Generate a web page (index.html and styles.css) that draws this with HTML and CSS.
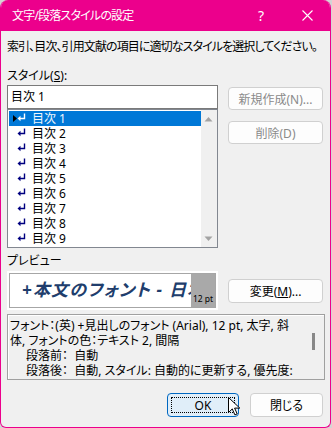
FILE: index.html
```html
<!DOCTYPE html>
<html lang="ja">

<head>
    <meta charset="UTF-8">
    <meta name="viewport" content="width=device-width, initial-scale=1.0">
    <title>文字/段落スタイルの設定</title>
    <link rel="stylesheet" href="styles.css">
</head>

<body>
    <div class="window">
        <div class="titlebar">
            <span class="title">文字/段落スタイルの設定</span>
            <span class="caption-btn">?</span>
            <span class="caption-btn">
                <svg width="11" height="11" viewBox="0 0 11 11"><path d="M0.5 0.5l10 10M10.5 0.5l-10 10" stroke="#fff" stroke-width="1.1" fill="none"/></svg>
            </span>
        </div>

        <div class="content">
            <p class="intro">索引、目次、引用文献の項目に適切なスタイルを選択してください。</p>

            <div class="style-section">
                <div class="style-left">
                    <div class="label">スタイル(<u>S</u>):</div>
                    <div class="style-input">目次 1</div>
                    <div class="style-list">
                        <ul class="rows">
                            <li class="row selected">
                                <svg class="row-icon" width="23" height="15" viewBox="0 0 23 15">
                                    <path d="M4 4l4 3.5-4 3.5z" fill="#000"/>
                                    <path d="M15.5 2.5v5H11" stroke="#fff" stroke-width="1.4" fill="none"/>
                                    <path d="M8.5 7.5l3-2.8v5.6z" fill="#fff"/>
                                </svg>
                                <span>目次 1</span>
                            </li>
                            <li class="row"><svg class="row-icon" width="23" height="15" viewBox="0 0 23 15"><path d="M15.5 2.5v5H11" stroke="#000080" stroke-width="1.4" fill="none"/><path d="M8.5 7.5l3-2.8v5.6z" fill="#000080"/></svg><span>目次 2</span></li>
                            <li class="row"><svg class="row-icon" width="23" height="15" viewBox="0 0 23 15"><path d="M15.5 2.5v5H11" stroke="#000080" stroke-width="1.4" fill="none"/><path d="M8.5 7.5l3-2.8v5.6z" fill="#000080"/></svg><span>目次 3</span></li>
                            <li class="row"><svg class="row-icon" width="23" height="15" viewBox="0 0 23 15"><path d="M15.5 2.5v5H11" stroke="#000080" stroke-width="1.4" fill="none"/><path d="M8.5 7.5l3-2.8v5.6z" fill="#000080"/></svg><span>目次 4</span></li>
                            <li class="row"><svg class="row-icon" width="23" height="15" viewBox="0 0 23 15"><path d="M15.5 2.5v5H11" stroke="#000080" stroke-width="1.4" fill="none"/><path d="M8.5 7.5l3-2.8v5.6z" fill="#000080"/></svg><span>目次 5</span></li>
                            <li class="row"><svg class="row-icon" width="23" height="15" viewBox="0 0 23 15"><path d="M15.5 2.5v5H11" stroke="#000080" stroke-width="1.4" fill="none"/><path d="M8.5 7.5l3-2.8v5.6z" fill="#000080"/></svg><span>目次 6</span></li>
                            <li class="row"><svg class="row-icon" width="23" height="15" viewBox="0 0 23 15"><path d="M15.5 2.5v5H11" stroke="#000080" stroke-width="1.4" fill="none"/><path d="M8.5 7.5l3-2.8v5.6z" fill="#000080"/></svg><span>目次 7</span></li>
                            <li class="row"><svg class="row-icon" width="23" height="15" viewBox="0 0 23 15"><path d="M15.5 2.5v5H11" stroke="#000080" stroke-width="1.4" fill="none"/><path d="M8.5 7.5l3-2.8v5.6z" fill="#000080"/></svg><span>目次 8</span></li>
                            <li class="row"><svg class="row-icon" width="23" height="15" viewBox="0 0 23 15"><path d="M15.5 2.5v5H11" stroke="#000080" stroke-width="1.4" fill="none"/><path d="M8.5 7.5l3-2.8v5.6z" fill="#000080"/></svg><span>目次 9</span></li>
                        </ul>
                        <div class="vscroll">
                            <svg width="15" height="15" viewBox="0 0 15 15"><path d="M3.5 9.5l4-4.5 4 4.5z" fill="#a3a3a3"/></svg>
                            <svg width="15" height="15" viewBox="0 0 15 15"><path d="M3.5 5.5l4 4.5 4-4.5z" fill="#a3a3a3"/></svg>
                        </div>
                    </div>
                </div>
                <div class="style-buttons">
                    <button class="btn" disabled>新規作成(N)...</button>
                    <button class="btn" disabled>削除(D)</button>
                </div>
            </div>

            <div class="label preview-label">プレビュー</div>
            <div class="preview-row">
                <div class="preview">
                    <div class="preview-inner">
                        <div class="preview-text">+本文のフォント - 日本語</div>
                        <div class="preview-size">12 pt</div>
                    </div>
                </div>
                <button class="btn">変更(<u>M</u>)...</button>
            </div>

            <div class="desc">
                <div class="desc-text">
                    <div>フォント：(英) +見出しのフォント (Arial), 12 pt, 太字, 斜</div>
                    <div>体, フォントの色：テキスト 2, 間隔</div>
                    <div class="indent">段落前：&nbsp; 自動</div>
                    <div class="indent">段落後：&nbsp; 自動, スタイル: 自動的に更新する, 優先度:</div>
                </div>
                <div class="desc-scroll"><span class="thumb"></span></div>
            </div>

            <div class="footer">
                <button class="btn btn-default"><span class="focus">OK</span></button>
                <button class="btn btn-close">閉じる</button>
            </div>
        </div>

        <!-- mouse pointer over the OK button -->
        <svg class="cursor" width="13" height="19" viewBox="0 0 13 19">
            <path d="M0.5 0.5v15l3.8-3.6 2.6 6 2.3-1-2.6-5.8h5.2z" fill="#fff" stroke="#000" stroke-width="1"/>
        </svg>
    </div>
</body>

</html>
```

FILE: styles.css
```css
* {
    margin: 0;
    padding: 0;
    box-sizing: border-box;
}

body {
    background: #d4d4d4;
    font-family: "Noto Sans", "Noto Sans CJK JP", sans-serif;
    font-size: 12px;
    font-feature-settings: "palt";
    color: #000;
}

/* Dialog frame */
.window {
    position: relative;
    width: 331px;
    height: 428px;
    background: #f0f0f0;
    border: 1px solid #ec008c;
    border-top: none;
    border-radius: 8px 8px 6px 6px;
    overflow: hidden;
}

.titlebar {
    display: flex;
    align-items: center;
    height: 31px;
    background: #ec008c;
    color: #fff;
    padding-left: 11px;
}

.title {
    flex: 1;
    line-height: 15px;
    letter-spacing: -0.8px;
}

.caption-btn {
    display: flex;
    align-items: center;
    justify-content: center;
    width: 46px;
    height: 31px;
    font-size: 14px;
}

.content {
    padding: 8px 7px 0 6px;
}

.intro {
    line-height: 15px;
    white-space: nowrap;
    letter-spacing: -0.9px;
}

.label {
    line-height: 15px;
}

/* Style chooser */
.style-section {
    display: grid;
    grid-template-columns: 211px 95px;
    column-gap: 10px;
    margin-top: 14px;
}

.style-input {
    height: 24px;
    margin-top: 2px;
    background: #fff;
    border: 1px solid #7a7a7a;
    padding: 0 3px;
    line-height: 22px;
}

.style-list {
    display: flex;
    height: 139px;
    background: #fff;
    border: 1px solid #828790;
    padding: 1px 0 1px 1px;
}

.rows {
    flex: 1;
    list-style: none;
}

.row {
    display: flex;
    align-items: center;
    height: 15px;
    line-height: 15px;
    overflow: hidden;
}

.row-icon {
    flex: none;
}

.row.selected {
    background: #0078d7;
    color: #eef6fd;
}

.vscroll {
    display: flex;
    flex-direction: column;
    justify-content: space-between;
    width: 16px;
    margin-top: -1px;
    margin-bottom: -1px;
    padding: 2px 0 1px;
    background: #f0f0f0;
}

.style-buttons {
    display: flex;
    flex-direction: column;
    gap: 11px;
    padding-top: 19px;
}

/* Buttons */
.btn {
    height: 23px;
    background: #fdfdfd;
    border: 1px solid #d0d0d0;
    border-radius: 4px;
    font-family: inherit;
    font-size: 12px;
    font-feature-settings: "palt";
    color: #000;
}

.btn:disabled {
    color: #8a8a8a;
}

/* Preview */
.preview-label {
    margin-top: 5px;
}

.preview-row {
    display: flex;
    align-items: center;
    gap: 10px;
    margin-top: 3px;
}

.preview-row .btn {
    width: 95px;
    height: 24px;
}

.preview {
    width: 211px;
    height: 39px;
    border: 2px solid #fff;
}

.preview-inner {
    display: flex;
    height: 100%;
    background: #fff;
    border: 1px solid #a6a6a6;
}

.preview-text {
    flex: 1;
    overflow: hidden;
    white-space: nowrap;
    padding-left: 12px;
    line-height: 31px;
    font-size: 17px;
    font-weight: bold;
    font-style: italic;
    letter-spacing: 1.2px;
    color: #203d6c;
}

.preview-size {
    display: flex;
    align-items: flex-end;
    justify-content: center;
    flex: none;
    width: 24px;
    padding-bottom: 3px;
    background: #a9a9a9;
    font-size: 8.5px;
    line-height: 11px;
    white-space: nowrap;
}

/* Description */
.desc {
    display: flex;
    height: 66px;
    margin-top: 4px;
    margin-right: -2px;
    border: 1px solid #a0a0a0;
    box-shadow: inset 1px 1px 0 #fff;
}

.desc-text {
    flex: 1;
    overflow: hidden;
    white-space: nowrap;
    padding: 3px 0 0 2px;
    line-height: 15px;
}

.desc-text .indent {
    padding-left: 16px;
}

.desc-scroll {
    width: 12px;
    padding-top: 18px;
}

.thumb {
    display: block;
    width: 3px;
    height: 17px;
    background: #888;
}

/* Footer */
.footer {
    display: flex;
    justify-content: flex-end;
    gap: 11px;
    margin-top: 13px;
}

.footer .btn {
    height: 24px;
}

.btn-default {
    width: 72px;
    padding: 3px;
    background: #e0eef9;
    border-color: #0067c0;
}

.btn-default .focus {
    display: flex;
    align-items: center;
    justify-content: center;
    height: 100%;
    border: 1px dotted #000;
}

.btn-close {
    width: 73px;
}

.cursor {
    position: absolute;
    left: 227px;
    top: 397px;
}
```
